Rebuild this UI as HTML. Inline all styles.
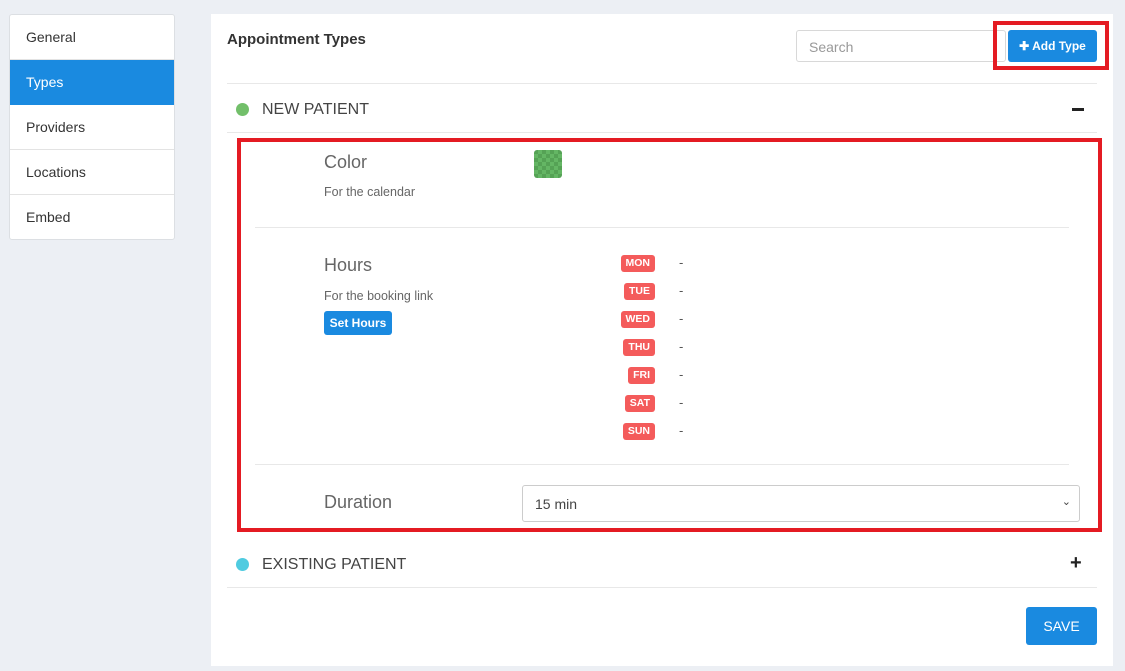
<!DOCTYPE html>
<html><head><style>
*{box-sizing:border-box;margin:0;padding:0}
body{width:1125px;height:671px;background:#eceff4;font-family:"Liberation Sans",sans-serif;position:relative;overflow:hidden;color:#333}
.abs{position:absolute}
.side{left:9px;top:14px;width:166px;height:226px;background:#fff;border:1px solid #dcdfe3;border-radius:3px;overflow:hidden}
.side div{height:45px;line-height:45px;padding-left:16px;font-size:14px;color:#333;border-bottom:1px solid #e3e3e3}
.side div.act{background:#1a8ae0;color:#fff;border-bottom:none}
.main{left:211px;top:14px;width:902px;height:652px;background:#fff}
.hr{position:absolute;height:1px;background:#e8e8e8}
.badge{position:absolute;right:470px;height:17px;line-height:17px;padding:0 5px;background:#f45b5b;color:#fff;font-size:10.5px;font-weight:bold;border-radius:3px}
.dash{position:absolute;left:679px;font-size:13px;color:#555}
</style></head><body>
<div class="abs side"><div>General</div><div class="act">Types</div><div>Providers</div><div>Locations</div><div style="border:none">Embed</div></div>
<div class="abs main"></div>
<div class="abs" style="left:227px;top:31px;font-size:15px;font-weight:bold;color:#333">Appointment Types</div>
<div class="abs" style="left:796px;top:30px;width:210px;height:32px;border:1px solid #d8d8d8;border-radius:3px;padding:8px 12px;font-size:14px;color:#999">Search</div>
<div class="abs" style="left:993px;top:21px;width:116px;height:49px;border:4px solid #e41b23"></div>
<div class="abs" style="left:1008px;top:30px;width:89px;height:32px;background:#1a8ae0;border-radius:3px;color:#fff;font-size:12px;font-weight:bold;line-height:32px;text-align:center">✚ Add Type</div>
<div class="hr" style="left:227px;top:83px;width:870px"></div>
<div class="abs" style="left:236px;top:103px;width:13px;height:13px;border-radius:50%;background:#72bf6a"></div>
<div class="abs" style="left:262px;top:101px;font-size:16px;color:#444">NEW PATIENT</div>
<div class="abs" style="left:1072px;top:108px;width:12px;height:3px;background:#222"></div>
<div class="hr" style="left:227px;top:132px;width:870px"></div>
<div class="abs" style="left:237px;top:138px;width:865px;height:394px;border:4px solid #e41b23"></div>
<div class="abs" style="left:324px;top:152px;font-size:18px;color:#666">Color</div>
<div class="abs" style="left:324px;top:185px;font-size:12.5px;color:#666">For the calendar</div>
<div class="abs" style="left:534px;top:150px;width:28px;height:28px;border-radius:3px;background:#5aaa5a;background-image:repeating-conic-gradient(#64b664 0 25%,#55a255 0 50%);background-size:8px 8px"></div>
<div class="hr" style="left:255px;top:227px;width:814px"></div>
<div class="abs" style="left:324px;top:255px;font-size:18px;color:#666">Hours</div>
<div class="abs" style="left:324px;top:289px;font-size:12.5px;color:#666">For the booking link</div>
<div class="abs" style="left:324px;top:311px;width:68px;height:24px;background:#1a8ae0;border-radius:3px;color:#fff;font-size:12px;font-weight:bold;line-height:24px;text-align:center">Set Hours</div>
<div class="badge" style="top:255px">MON</div><div class="dash" style="top:255px">-</div>
<div class="badge" style="top:283px">TUE</div><div class="dash" style="top:283px">-</div>
<div class="badge" style="top:311px">WED</div><div class="dash" style="top:311px">-</div>
<div class="badge" style="top:339px">THU</div><div class="dash" style="top:339px">-</div>
<div class="badge" style="top:367px">FRI</div><div class="dash" style="top:367px">-</div>
<div class="badge" style="top:395px">SAT</div><div class="dash" style="top:395px">-</div>
<div class="badge" style="top:423px">SUN</div><div class="dash" style="top:423px">-</div>
<div class="hr" style="left:255px;top:464px;width:814px"></div>
<div class="abs" style="left:324px;top:492px;font-size:18px;color:#666">Duration</div>
<div class="abs" style="left:522px;top:485px;width:558px;height:37px;border:1px solid #ccc;border-radius:3px;padding:10px 12px;font-size:14px;color:#444">15 min<span style="position:absolute;right:8px;top:9px;font-size:11px">&#8964;</span></div>
<div class="abs" style="left:236px;top:558px;width:13px;height:13px;border-radius:50%;background:#4fcbe0"></div>
<div class="abs" style="left:262px;top:556px;font-size:16px;color:#444">EXISTING PATIENT</div>
<div class="abs" style="left:1070px;top:552px;font-size:20px;font-weight:bold;color:#222">+</div>
<div class="hr" style="left:227px;top:587px;width:870px"></div>
<div class="abs" style="left:1026px;top:607px;width:71px;height:38px;background:#1a8ae0;border-radius:3px;color:#fff;font-size:14px;line-height:38px;text-align:center">SAVE</div>
</body></html>
